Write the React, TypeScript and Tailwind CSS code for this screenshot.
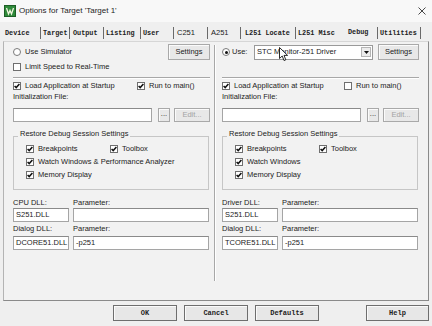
import React from 'react';
import clsx from 'clsx';

function Check({ checked }: { checked: boolean }) {
  return (
    <span className="w-[8px] h-[8px] border border-[#6f6f6f] bg-white flex items-center justify-center shrink-0">
      {checked && (
        <svg width="6" height="6" viewBox="0 0 6 6">
          <path d="M0.6 2.9 L2.2 4.6 L5.4 0.9" fill="none" stroke="#111" strokeWidth="1.5" />
        </svg>
      )}
    </span>
  );
}

function Radio({ checked }: { checked: boolean }) {
  return (
    <span className="w-[8px] h-[8px] rounded-full border border-[#7a7a7a] bg-white flex items-center justify-center shrink-0">
      {checked && <span className="w-[3px] h-[3px] rounded-full bg-[#111]" />}
    </span>
  );
}

function CheckRow({ checked, label, className }: { checked: boolean; label: string; className?: string }) {
  return (
    <div className={clsx('flex items-center gap-[4px] whitespace-nowrap', className)}>
      <Check checked={checked} />
      <span>{label}</span>
    </div>
  );
}

function Btn({ children, className, disabled }: { children: React.ReactNode; className?: string; disabled?: boolean }) {
  return (
    <button
      className={clsx(
        'h-full border border-[#a9a9a9] bg-[#e8e8e8] flex items-center justify-center shadow-[inset_1px_1px_0_#fbfbfb] shrink-0',
        disabled ? 'text-[#a3a3a3]' : 'text-[#222]',
        className
      )}
    >
      {children}
    </button>
  );
}

function Field({ value, className }: { value?: string; className?: string }) {
  return (
    <div className={clsx('h-full bg-white border border-[#a5a5a5] border-t-[#8a8a8a] pl-[2px] flex items-center whitespace-nowrap shrink-0', className)}>
      {value}
    </div>
  );
}

function Column({ right }: { right?: boolean }) {
  return (
    <div className="w-[197px] pt-[2px] flex flex-col">
      {right ? (
        <div className="h-[16px] flex items-center">
          <Radio checked />
          <span className="ml-[2px]">Use:</span>
          <div className="ml-auto w-[119px] h-[15px] bg-white border border-[#9a9a9a] flex items-center pl-[2px]">
            <span className="flex-1 whitespace-nowrap">STC Monitor-251 Driver</span>
            <span className="w-[10px] h-[10px] mr-[1px] border border-[#b5b5b5] bg-[#ececec] flex items-center justify-center">
              <svg width="5" height="3" viewBox="0 0 5 3"><path d="M0 0 H5 L2.5 3 Z" fill="#111" /></svg>
            </span>
          </div>
          <Btn className="ml-[5px] w-[41px]">Settings</Btn>
        </div>
      ) : (
        <div className="h-[16px] flex items-center justify-between">
          <div className="flex items-center gap-[4px]">
            <Radio checked={false} />
            <span>Use Simulator</span>
          </div>
          <Btn className="w-[42px]">Settings</Btn>
        </div>
      )}

      <div className="h-[14px] flex items-center">
        {!right && <CheckRow checked={false} label="Limit Speed to Real-Time" />}
      </div>

      <div className="mt-[3px] h-[2px] border-t border-t-[#a8a8a8] border-b border-b-white" />

      <div className="h-[13px] flex items-center">
        <CheckRow checked label="Load Application at Startup" className={right ? 'w-[122px]' : 'w-[124px]'} />
        <CheckRow checked={!right} label="Run to main()" />
      </div>

      <div className="h-[10px] flex items-center text-[#222]">Initialization File:</div>

      <div className="mt-[6px] h-[14px] flex">
        <Field className="w-[139px]" />
        <Btn className="ml-[6px] w-[12px] pb-[2px]">...</Btn>
        <Btn className="ml-[4px] w-[36px]" disabled>Edit...</Btn>
      </div>

      <fieldset className="mt-[8px] w-[196px] border border-[#c6c6c6] pl-[12px] pb-[8px]">
        <legend className="-ml-[8px] px-[2px] pb-[6px] leading-[7px] whitespace-nowrap">Restore Debug Session Settings</legend>
        <div className="h-[12px] flex items-center">
          <CheckRow checked label="Breakpoints" className="w-[84px]" />
          <CheckRow checked label="Toolbox" />
        </div>
        <CheckRow checked label={right ? 'Watch Windows' : 'Watch Windows & Performance Analyzer'} className="h-[13px]" />
        <CheckRow checked label="Memory Display" className="h-[13px]" />
      </fieldset>

      <div className="mt-[8px] h-[10px] flex items-center">
        <span className="w-[60px]">{right ? 'Driver DLL:' : 'CPU DLL:'}</span>
        <span>Parameter:</span>
      </div>
      <div className="h-[14px] flex gap-[4px]">
        <Field value="S251.DLL" className="w-[56px]" />
        <Field className="w-[136px]" />
      </div>

      <div className="mt-[2px] h-[10px] flex items-center">
        <span className="w-[60px]">Dialog DLL:</span>
        <span>Parameter:</span>
      </div>
      <div className="mt-[2px] h-[14px] flex gap-[4px]">
        <Field value={right ? 'TCORE51.DLL' : 'DCORE51.DLL'} className="w-[56px]" />
        <Field value="-p251" className="w-[136px]" />
      </div>
    </div>
  );
}

const tabs = [
  { label: 'Device', w: 'w-[38px] pl-[2px] border-r', mono: true },
  { label: 'Target', w: 'w-[29px] pl-[2px] border-r', mono: true },
  { label: 'Output', w: 'w-[34px] pl-[3px] border-r', mono: true },
  { label: 'Listing', w: 'w-[37px] pl-[2px] border-r', mono: true },
  { label: 'User', w: 'w-[33px] pl-[2px] border-r', mono: true },
  { label: 'C251', w: 'w-[34px] pl-[3px] border-r', mono: false },
  { label: 'A251', w: 'w-[33px] pl-[3px] border-r', mono: false },
  { label: 'L251 Locate', w: 'w-[55px] pl-[4px] border-r', mono: true },
  { label: 'L251 Misc', w: 'w-[48px] pl-[2px]', mono: true },
  { label: 'Debug', w: 'w-[34px] pl-[4px] pb-[2px] border-r', mono: true },
  { label: 'Utilities', w: 'w-[43px] pl-[2px] border-r', mono: true },
];

export default function App() {
  return (
    <div className="relative w-[432px] h-[326px] overflow-hidden bg-[#efefef] text-[#222] text-[7.5px] leading-none font-['Liberation_Sans',Arial,sans-serif]">
      <div className="h-[22px] bg-[#f8f8f8] flex items-center">
        <svg className="ml-[4px]" width="12" height="12" viewBox="0 0 12 12">
          <rect x="0" y="0" width="12" height="12" fill="#2f8a3a" />
          <rect x="0.5" y="0.5" width="11" height="11" fill="none" stroke="#1d5e25" />
          <path d="M2.5 3 L4.5 9 L6 5.5 L7.5 9 L9.5 3" fill="none" stroke="#f4f4e0" strokeWidth="1.3" />
        </svg>
        <span className="ml-[3px] text-[8px] text-[#1e1e1e] whitespace-nowrap">Options for Target 'Target 1'</span>
        <svg className="ml-auto mr-[6px]" width="8" height="8" viewBox="0 0 8 8">
          <path d="M0.5 0.5 L7.5 7.5 M7.5 0.5 L0.5 7.5" stroke="#333" strokeWidth="0.9" />
        </svg>
      </div>

      <div className="h-[19px] pl-[3px] pt-[5px] flex items-start">
        {tabs.map((t) => (
          <div
            key={t.label}
            className={clsx(
              'h-[12px] flex items-center whitespace-nowrap border-[#6a6a6a]',
              t.w,
              t.mono ? "font-['Liberation_Mono',monospace] font-bold text-[6.8px]" : 'text-[7.5px]'
            )}
          >
            {t.label}
          </div>
        ))}
      </div>

      <div className="ml-[3px] w-[426px] h-[260px] bg-[#f2f2f2] border border-t-[#d6d6d6] border-l-[#b4b4b4] border-r-[#8a8a8a] border-b-[#8a8a8a] pl-[9px] flex">
        <Column />
        <div className="ml-[4px] mt-[3px] w-[2px] h-[236px] border-l border-l-[#a8a8a8] border-r border-r-white" />
        <div className="ml-[6px]">
          <Column right />
        </div>
      </div>

      <div className="mt-[4px] h-[16px] pl-[113px] flex font-['Liberation_Mono',monospace] font-bold text-[7px]">
        <button className="w-[64px] h-full border border-[#6e6e6e] bg-[#e7e7e7] shadow-[inset_1px_1px_0_#fafafa]">OK</button>
        <button className="ml-[7px] w-[64px] h-full border border-[#6e6e6e] bg-[#e7e7e7] shadow-[inset_1px_1px_0_#fafafa]">Cancel</button>
        <button className="ml-[7px] w-[64px] h-full border border-[#6e6e6e] bg-[#e7e7e7] shadow-[inset_1px_1px_0_#fafafa]">Defaults</button>
        <button className="ml-[47px] w-[63px] h-full border border-[#6e6e6e] bg-[#e7e7e7] shadow-[inset_1px_1px_0_#fafafa]">Help</button>
      </div>

      <svg className="absolute left-[279px] top-[47px]" width="10" height="15" viewBox="0 0 10 15">
        <path d="M0.5 0.5 L0.5 11.5 L3.2 9 L5 13.5 L6.8 12.8 L5 8.4 L8.6 8.4 Z" fill="#fff" stroke="#111" strokeWidth="0.9" />
      </svg>
    </div>
  );
}
